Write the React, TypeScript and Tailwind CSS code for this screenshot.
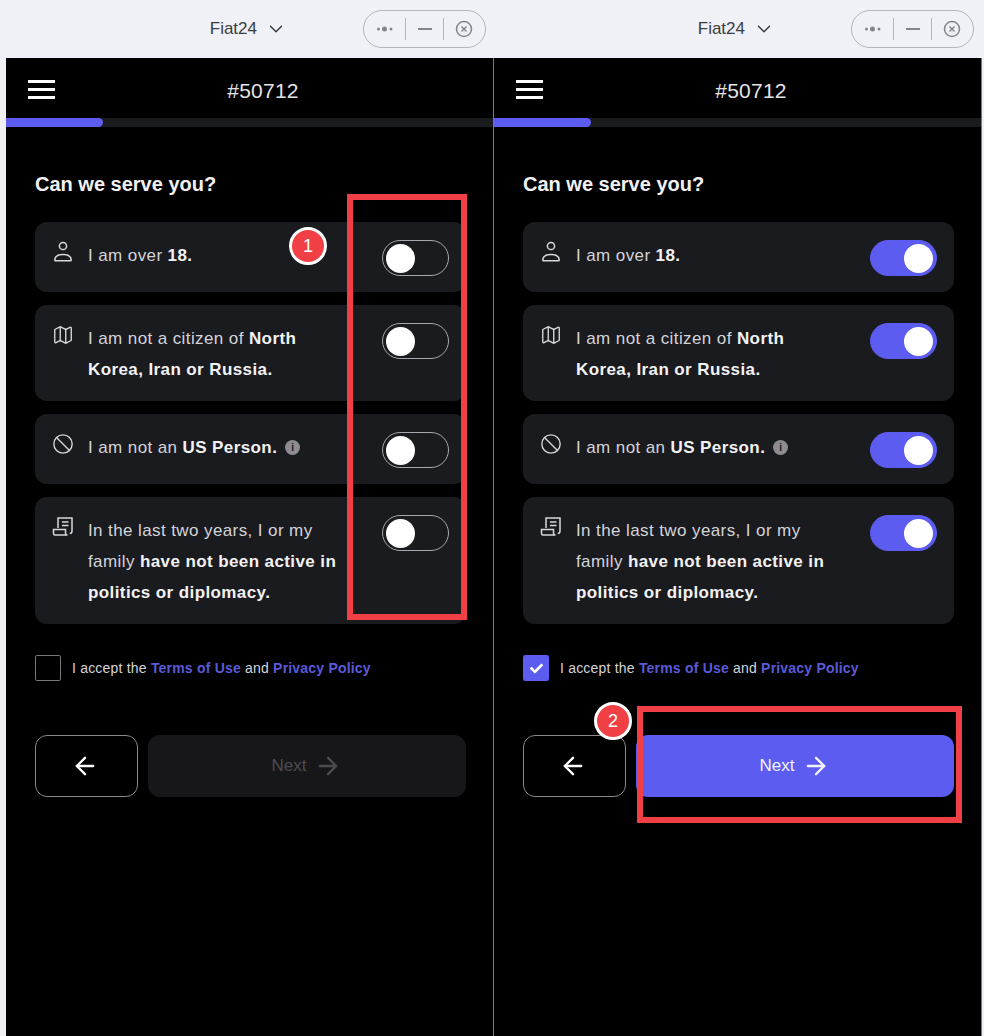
import React from 'react'
import { ArrowLeft, ArrowRight, Ban, ChevronDown, Map } from 'lucide-react'
import { FaCheck } from 'react-icons/fa'

function PersonIcon() {
  return (
    <svg width="22" height="22" viewBox="0 0 22 22" fill="none" stroke="currentColor" strokeWidth="1.5">
      <circle cx="11" cy="5" r="3.6" />
      <path d="M2.800 19.200c0-3.400 3.200-5.600 8.200-5.600s8.200 2.200 8.200 5.600c0 .4-.3.600-.6.600H3.400c-.3 0-.6-.2-.6-.6z" />
    </svg>
  )
}

function ReceiptIcon() {
  return (
    <svg width="22" height="22" viewBox="0 0 22 22" fill="none" stroke="currentColor" strokeWidth="1.5">
      <path d="M6 12V2h14v13c0 1.500-.8 2.500-2.300 2.500" />
      <path d="M1.500 13.500h12v3.500c0 1 .8 2 2 2H3c-1 0-1.500-.8-1.500-1.800z" />
      <path d="M10 6h6.500M10 9.500h6.500" />
    </svg>
  )
}

function Toggle({ on }: { on: boolean }) {
  return (
    <div
      className={`flex h-[36px] w-[67px] shrink-0 items-center rounded-full border-[1.5px] px-[3px] ${
        on ? 'justify-end border-[#5c5cf0] bg-[#5c5cf0]' : 'justify-start border-[#a8a8ac] bg-transparent'
      }`}
    >
      <div className="h-[29px] w-[29px] rounded-full bg-white" />
    </div>
  )
}

function Row({
  icon,
  children,
  on,
  height,
}: {
  icon: React.ReactNode
  children: React.ReactNode
  on: boolean
  height: string
}) {
  return (
    <div className={`flex justify-between rounded-xl bg-[#1a1b1e] pl-[17px] pr-[17px] pt-[18px] ${height}`}>
      <div className="flex gap-[15px]">
        <div className="mt-[1px] h-[22px] w-[21px] shrink-0 text-[#d8d8dc]">{icon}</div>
        <p className="w-[256px] text-[17px] leading-[31px] tracking-[0.4px] text-[#d4d4d8]">{children}</p>
      </div>
      <Toggle on={on} />
    </div>
  )
}

function Bold({ children }: { children: React.ReactNode }) {
  return <b className="font-bold text-[#f2f2f4]">{children}</b>
}

function TitleBar() {
  return (
    <div className="flex h-[58px] flex-1 items-center justify-end pr-[8px]">
      <div className="mr-[76px] flex items-center gap-[8px] text-[#3a3b40]">
        <span className="text-[17px]">Fiat24</span>
        <ChevronDown size={22} strokeWidth={1.6} />
      </div>
      <div className="flex h-[38px] w-[123px] items-center justify-between rounded-full border border-[#b4b5bb] px-[12px] text-[#85868c]">
        <svg width="18" height="8" viewBox="0 0 18 8" fill="currentColor">
          <circle cx="2.500" cy="4" r="1.500" />
          <circle cx="8.500" cy="4" r="2.500" />
          <circle cx="15" cy="4" r="1.500" />
        </svg>
        <div className="h-[22px] w-px bg-[#b4b5bb]" />
        <div className="h-[2px] w-[14px] bg-[#85868c]" />
        <div className="h-[22px] w-px bg-[#b4b5bb]" />
        <svg width="18" height="18" viewBox="0 0 18 18" fill="none" stroke="currentColor" strokeWidth="1.500">
          <circle cx="9" cy="9" r="7.500" />
          <path d="M6.500 6.500l5 5M11.500 6.500l-5 5" />
        </svg>
      </div>
    </div>
  )
}

function Panel({ active }: { active: boolean }) {
  return (
    <div className="flex h-[978px] w-[488px] flex-col border-r border-[#77777c] bg-black">
      {/* Header */}
      <div className="flex h-[60px] items-center pl-[22px] pr-[22px]">
        <div className="flex w-[27px] flex-col gap-[5px] pt-[3px]">
          <div className="h-[3px] bg-white" />
          <div className="h-[3px] bg-white" />
          <div className="h-[3px] bg-white" />
        </div>
        <div className="flex-1 pt-[5px] text-center text-[21px] tracking-[0.2px] text-[#e4e4e6]">#50712</div>
      </div>
      <div className="h-[9px] bg-[#1a1b1d]">
        <div className="h-full w-[97px] rounded-r-full bg-[#5c5cf0]" />
      </div>

      <div className="pl-[29px] pr-[27px]">
        <h1 className="mt-[43px] text-[20px] font-bold leading-[28px] text-[#f2f2f4]">Can we serve you?</h1>

        <div className="mt-[24px] flex flex-col gap-[13px]">
          <Row icon={<PersonIcon />} on={active} height="h-[70px]">
            I am over <Bold>18.</Bold>
          </Row>
          <Row icon={<Map size={22} strokeWidth={1.5} />} on={active} height="h-[96px]">
            I am not a citizen of <Bold>North Korea, Iran or Russia.</Bold>
          </Row>
          <Row icon={<Ban size={22} strokeWidth={1.5} />} on={active} height="h-[70px]">
            <span className="inline-flex items-center gap-[8px] whitespace-nowrap">
              <span>
                I am not an <Bold>US Person.</Bold>
              </span>
              <span className="flex h-[15px] w-[15px] items-center justify-center rounded-full bg-[#8c8c92] text-[10px] font-bold leading-none text-[#1b1c1f]">
                i
              </span>
            </span>
          </Row>
          <Row icon={<ReceiptIcon />} on={active} height="h-[127px]">
            In the last two years, I or my family <Bold>have not been active in politics or diplomacy.</Bold>
          </Row>
        </div>

        <div className="mt-[31px] flex items-center gap-[11px]">
          {active ? (
            <div className="flex h-[26px] w-[26px] items-center justify-center rounded-[2px] bg-[#5c5cf0] text-white">
              <FaCheck size={13} />
            </div>
          ) : (
            <div className="h-[26px] w-[26px] rounded-[2px] border border-[#77777c]" />
          )}
          <p className="text-[14px] tracking-[0.2px] text-[#d4d4d8]">
            I accept the <span className="font-bold text-[#5a5ad8]">Terms of Use</span> and{' '}
            <span className="font-bold text-[#5a5ad8]">Privacy Policy</span>
          </p>
        </div>

        <div className="mt-[54px] flex gap-[10px]">
          <button className="flex h-[62px] w-[103px] items-center justify-center rounded-xl border border-[#8a8a8e] pr-[4px] text-white">
            <ArrowLeft size={28} strokeWidth={2} />
          </button>
          <button
            className={`flex h-[62px] flex-1 items-center justify-center gap-[8px] rounded-xl text-[17px] ${
              active ? 'bg-[#5c5cf0] text-[#f2f2f8]' : 'bg-[#171719] text-[#4c4c50]'
            }`}
          >
            Next <ArrowRight size={28} strokeWidth={2} />
          </button>
        </div>
      </div>
    </div>
  )
}

function Badge({ n, className }: { n: number; className: string }) {
  return (
    <div
      className={`absolute flex h-[38px] w-[38px] items-center justify-center rounded-full border-[3px] border-white bg-[#f04045] text-[18px] text-white ${className}`}
    >
      {n}
    </div>
  )
}

export default function App() {
  return (
    <div
      className="relative h-[1036px] w-[984px] overflow-hidden bg-[#f0f1f7]"
      style={{ fontFamily: '"Liberation Sans", Arial, sans-serif' }}
    >
      <div className="ml-[6px] flex w-[976px]">
        <TitleBar />
        <TitleBar />
      </div>
      <div className="ml-[6px] flex w-[976px]">
        <Panel active={false} />
        <Panel active />
      </div>

      {/* Annotations */}
      <div className="absolute left-[347px] top-[194px] h-[426px] w-[120px] border-[6px] border-[#f04045]" />
      <div className="absolute left-[637px] top-[706px] h-[117px] w-[325px] border-[6px] border-[#f04045]" />
      <Badge n={1} className="left-[289px] top-[227px]" />
      <Badge n={2} className="left-[594px] top-[702px]" />
    </div>
  )
}
